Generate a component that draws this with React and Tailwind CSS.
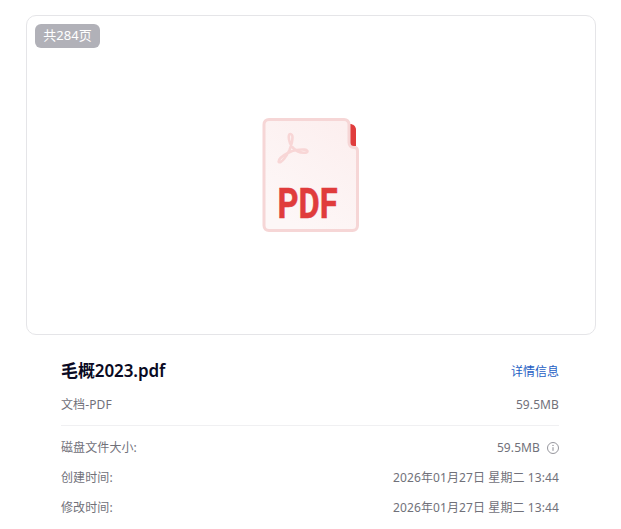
const FONT = 'font-["Noto_Sans","Noto_Sans_CJK_SC",sans-serif]';

const PdfIcon = () => (
  <svg width="100" height="118" viewBox="0 0 100 118" fill="none">
    <defs>
      <linearGradient id="sheet" x1="1" y1="0" x2="0.4" y2="1">
        <stop offset="0" stopColor="#fceeee" />
        <stop offset="1" stopColor="#fdf7f7" />
      </linearGradient>
    </defs>
    <path d="M89 8c3 0 6 2 6 6v16h-6z" fill="#e03c3c" />
    <path
      d="M8 3.500h75c3 0 5 2 5 5v18c0 3 2 5 5 5h.5c2 0 3 1.500 3 3.500v74.500c0 3-2 5-5 5H8c-3 0-5-2-5-5V8.500c0-3 2-5 5-5z"
      fill="url(#sheet)"
      stroke="#f6d6d6"
      strokeWidth="3"
    />
    <path
      d="M29.500 18c-2.500 0-2 5-.5 9c1.500 4 5 7 8 8.500c3 1.500 9 2 9.500 0c.5-2-5-2.500-11-1.500c-6 1-13 5-16 8c-3 3-2 5 0 4c2-1 6-6 9-12c2-5 3-10 3-13c0-1.500-1-3-2-3z"
      stroke="#f8d6d6"
      strokeWidth="2.600"
      strokeLinejoin="round"
    />
    <text
      x="46.500"
      y="102"
      textAnchor="middle"
      fill="#e03c3c"
      stroke="#e03c3c"
      strokeWidth="0.600"
      fontSize="43"
      fontWeight="700"
      fontFamily="'Roboto', sans-serif"
      textLength="60"
      lengthAdjust="spacingAndGlyphs"
    >
      PDF
    </text>
  </svg>
);

const InfoIcon = () => (
  <svg width="12" height="12" viewBox="0 0 12 12" fill="none" className="ml-[7px]">
    <circle cx="6" cy="6" r="5.500" stroke="#8a8a92" strokeWidth="0.900" />
    <path d="M6 5.200v3.600" stroke="#8a8a92" strokeWidth="1" />
    <circle cx="6" cy="3.400" r="0.700" fill="#8a8a92" />
  </svg>
);

const DetailRow = ({ label, children }) => (
  <div className="flex h-[30px] items-center justify-between text-xs tracking-[0.1px] text-[#71717a]">
    <span>{label}</span>
    <span className="flex items-center">{children}</span>
  </div>
);

export default function App() {
  return (
    <div className={`h-[529px] w-[621px] overflow-hidden bg-white pt-[15px] pl-[26px] ${FONT}`}>
      <div className="relative flex h-[320px] w-[570px] items-center justify-center rounded-[10px] border border-[#e5e5e8]">
        <span className="absolute top-2 left-2 flex h-6 w-[65px] items-center justify-center rounded-md bg-[#b1b1b8] text-[13px] text-white">
          共284页
        </span>
        <PdfIcon />
      </div>

      <div className="ml-[35px] w-[498px]">
        <div className="mt-6 flex h-6 items-center justify-between">
          <span className="text-[17px] leading-6 font-semibold tracking-[-0.1px] text-[#0a0a23]">毛概2023.pdf</span>
          <a className="pt-[2px] text-xs text-[#1f5fc4]">详情信息</a>
        </div>
        <div className="mt-[10px] flex h-6 items-center justify-between text-xs tracking-[0.1px] text-[#71717a]">
          <span>文档-PDF</span>
          <span>59.5MB</span>
        </div>
        <div className="mt-2 mb-[7px] border-t border-[#f0f0f2]" />
        <DetailRow label="磁盘文件大小:">
          59.5MB
          <InfoIcon />
        </DetailRow>
        <DetailRow label="创建时间:">2026年01月27日 星期二 13:44</DetailRow>
        <DetailRow label="修改时间:">2026年01月27日 星期二 13:44</DetailRow>
      </div>
    </div>
  );
}
